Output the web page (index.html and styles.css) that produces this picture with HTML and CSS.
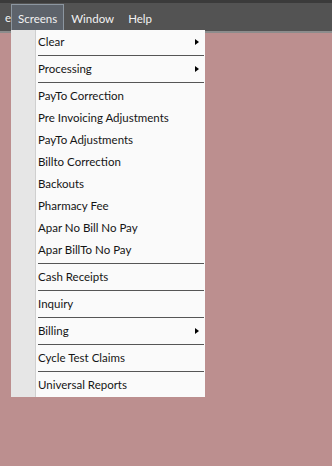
FILE: index.html
```html
<!DOCTYPE html>
<html lang="en">
<head>
  <meta charset="UTF-8">
  <title>Screens Menu</title>
  <link rel="stylesheet" href="styles.css">
</head>
<body>
  <div class="app">
    <div class="menubar">
      <span class="menu-item cut">e</span>
      <span class="menu-item open">Screens</span>
      <span class="menu-item">Window</span>
      <span class="menu-item">Help</span>
    </div>

    <div class="workspace"></div>

    <!-- dropdown for Screens -->
    <div class="dropdown">
      <div class="entry sub">Clear<span class="arrow"></span></div>
      <div class="sep"></div>
      <div class="entry sub">Processing<span class="arrow"></span></div>
      <div class="sep"></div>
      <div class="entry">PayTo Correction</div>
      <div class="entry">Pre Invoicing Adjustments</div>
      <div class="entry">PayTo Adjustments</div>
      <div class="entry">Billto Correction</div>
      <div class="entry">Backouts</div>
      <div class="entry">Pharmacy Fee</div>
      <div class="entry">Apar No Bill No Pay</div>
      <div class="entry">Apar BillTo No Pay</div>
      <div class="sep"></div>
      <div class="entry">Cash Receipts</div>
      <div class="sep"></div>
      <div class="entry">Inquiry</div>
      <div class="sep"></div>
      <div class="entry sub">Billing<span class="arrow"></span></div>
      <div class="sep"></div>
      <div class="entry">Cycle Test Claims</div>
      <div class="sep"></div>
      <div class="entry">Universal Reports</div>
    </div>
  </div>
</body>
</html>
```

FILE: styles.css
```css
body {
  margin: 0;
  font-family: Lato, 'Noto Sans', sans-serif;
  font-size: 11.5px;
  background: #bc8f8f;
  overflow: hidden;
}

.app {
  position: relative;
  width: 332px;
  height: 466px;
  display: flex;
  flex-direction: column;
}

.menubar {
  height: 28px;
  background: #535353;
  border-top: 3px solid #3b3b3b;
  border-bottom: 2px solid #8c8c8c;
  display: flex;
  align-items: stretch;
  color: #f2f2f2;
}

.menu-item {
  display: flex;
  align-items: center;
  padding: 0 6px;
  margin-top: 1px;
  border: 1px solid transparent;
  border-bottom: none;
}

.menu-item.cut {
  width: 11px;
  padding: 0;
  border: none;
  justify-content: flex-end;
  overflow: hidden;
}

.menu-item.open {
  background: #5d636b;
  border-color: #8c96a0;
}

.workspace {
  flex: 1;
  background: #bc8f8f;
}

.dropdown {
  position: absolute;
  left: 11px;
  top: 30px;
  width: 194px;
  padding: 1px 0;
  background: linear-gradient(to right, #e6e6e6 0, #e6e6e6 24px, #cfcfcf 24px, #cfcfcf 25px, #fafafa 25px);
  color: #151515;
}

.entry {
  height: 22px;
  line-height: 21px;
  padding-left: 27px;
  position: relative;
  white-space: nowrap;
}

.arrow {
  position: absolute;
  right: 6px;
  top: 8px;
  width: 0;
  height: 0;
  border-top: 3.5px solid transparent;
  border-bottom: 3.5px solid transparent;
  border-left: 4px solid #000;
}

.sep {
  height: 1px;
  margin: 2px 1px 2px 27px;
  background: #555;
}
```
